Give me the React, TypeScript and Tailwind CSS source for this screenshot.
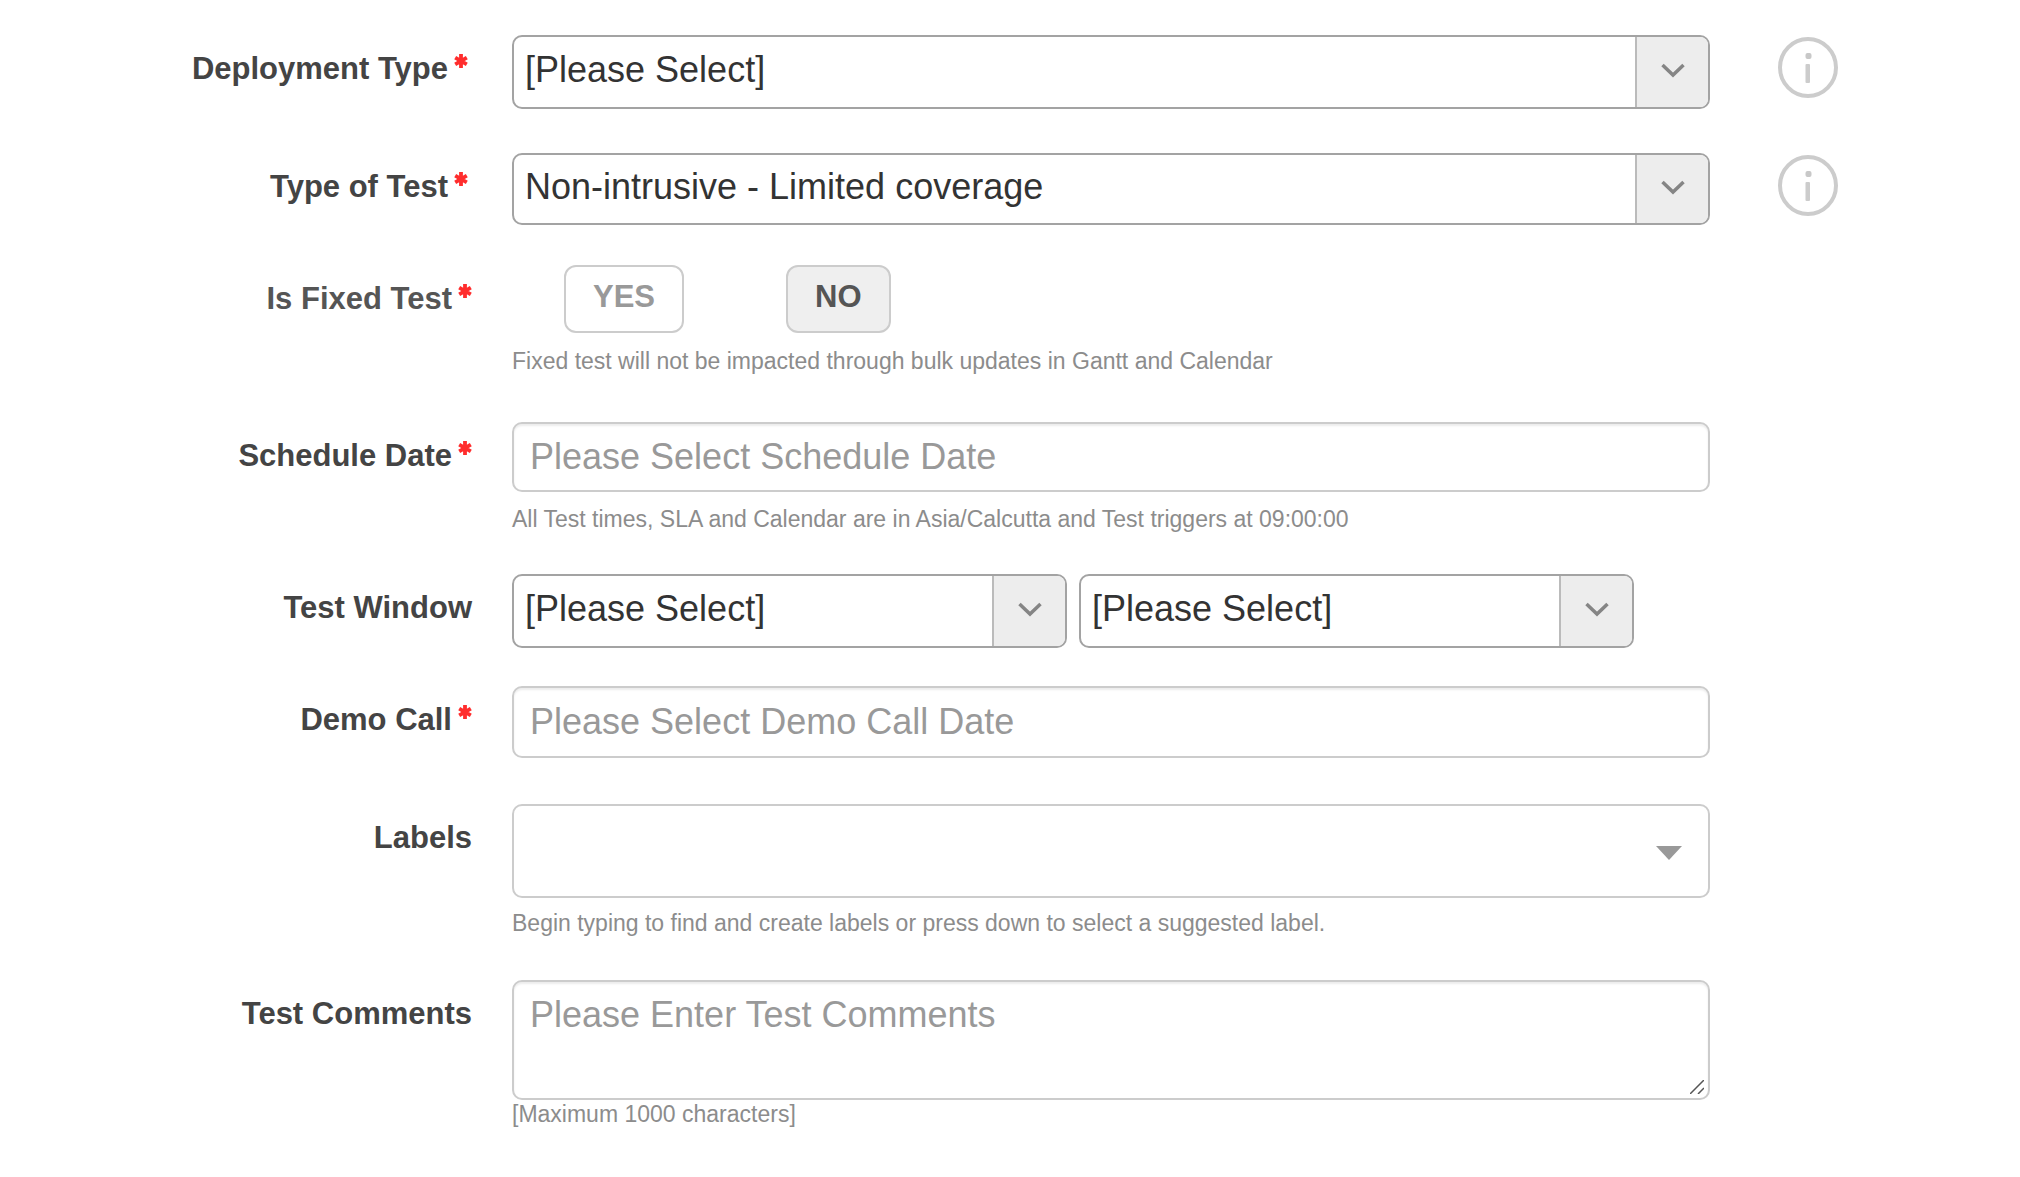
import React, { useState } from 'react';

const INPUT_CLASS =
  'block w-full rounded-[10px] border-2 border-[#ccc] bg-white px-4 text-[36px] text-[#555] placeholder:text-[#999] placeholder:opacity-100 shadow-[inset_0_2px_2px_rgba(0,0,0,0.075)] outline-none focus:border-[#66afe9]';

interface RowProps {
  label: string;
  htmlFor?: string;
  labelId?: string;
  required?: boolean;
  labelClass?: string;
  className?: string;
  aside?: React.ReactNode;
  children: React.ReactNode;
}

function RequiredMark() {
  return (
    <svg width="14" height="14" viewBox="0 0 14 14" stroke="#ff2d2d" strokeWidth="3.8" className="mt-1 ml-[6px]" aria-hidden="true">
      <path d="M7 0v14M1.2 3.6l11.6 6.8M12.8 3.6 1.2 10.4" />
    </svg>
  );
}

function Row({ label, htmlFor, labelId, required, labelClass = 'text-[#444]', className = '', aside, children }: RowProps) {
  const LabelTag = htmlFor ? 'label' : 'span';
  return (
    <div className={`grid grid-cols-[472px_minmax(0,1fr)_242px] ${className}`}>
      <LabelTag
        id={labelId}
        htmlFor={htmlFor}
        className={`flex items-start justify-end pt-[15px] text-[31px] leading-[38px] font-bold ${labelClass}`}
      >
        {label}
        {required && <RequiredMark />}
      </LabelTag>
      <div className="ml-10 mr-[68px] min-w-0">{children}</div>
      <div className="pt-[2px]">{aside}</div>
    </div>
  );
}

interface SelectBoxProps {
  id: string;
  options: string[];
  ariaLabel?: string;
  height?: string;
}

function SelectBox({ id, options, ariaLabel, height = 'h-[74px]' }: SelectBoxProps) {
  return (
    <div className={`relative w-full overflow-hidden rounded-[10px] border-2 border-[#a3a3a3] bg-white ${height}`}>
      <select
        id={id}
        aria-label={ariaLabel}
        className="block h-full w-full appearance-none bg-transparent pb-[5px] pl-[11px] pr-20 text-[36px] text-[#333] outline-none"
      >
        {options.map((option) => (
          <option key={option}>{option}</option>
        ))}
      </select>
      <span className="pointer-events-none absolute inset-y-0 right-0 flex w-[73px] items-center justify-center border-l-2 border-[#bbb] bg-[#ededed] pb-[3px]">
        <svg width="24" height="15" viewBox="0 0 24 15" fill="none" stroke="#858585" strokeWidth="3.5">
          <path d="M1.5 2 12 12 22.5 2" />
        </svg>
      </span>
    </div>
  );
}

function InfoButton({ label }: { label: string }) {
  return (
    <button type="button" aria-label={label} className="block cursor-pointer">
      <svg width="60" height="61" viewBox="0 0 60 61" fill="none">
        <ellipse cx="30" cy="30.5" rx="28" ry="28.5" stroke="#ccc" strokeWidth="4" />
        <rect x="27.5" y="16" width="6" height="6" rx="2" fill="#c8c8c8" />
        <rect x="27.5" y="27" width="4.5" height="19" rx="1" fill="#ccc" />
      </svg>
    </button>
  );
}

function Help({ children, className = '' }: { children: React.ReactNode; className?: string }) {
  return <p className={`text-[23px] leading-[26px] text-[#8c8c8c] ${className}`}>{children}</p>;
}

export default function App() {
  const [isFixed, setIsFixed] = useState(false);

  const toggleClass = (active: boolean) =>
    `h-[68px] rounded-xl border-2 border-[#ccc] px-[27px] pb-1 text-[31px] font-bold cursor-pointer ${
      active ? 'bg-[#efefef] text-[#555]' : 'bg-white text-[#999]'
    }`;

  return (
    <form
      className="min-h-screen bg-white pt-[35px] pb-10 font-['Liberation_Sans',Arial,sans-serif]"
      onSubmit={(e) => e.preventDefault()}
    >
      <Row
        label="Deployment Type"
        htmlFor="deployment-type"
        required
        labelClass="pr-1 text-[#444]"
        aside={<InfoButton label="About deployment type" />}
      >
        <SelectBox id="deployment-type" options={['[Please Select]']} />
      </Row>

      <Row
        label="Type of Test"
        htmlFor="test-type"
        required
        className="mt-11"
        labelClass="pr-1 text-[#444]"
        aside={<InfoButton label="About type of test" />}
      >
        <SelectBox id="test-type" options={['Non-intrusive - Limited coverage']} height="h-[72px]" />
      </Row>

      <Row label="Is Fixed Test" labelId="fixed-label" required className="mt-10" labelClass="text-[#555]">
        <div role="group" aria-labelledby="fixed-label" className="flex gap-[102px] pl-[52px]">
          <button type="button" aria-pressed={isFixed} className={toggleClass(isFixed)} onClick={() => setIsFixed(true)}>
            YES
          </button>
          <button type="button" aria-pressed={!isFixed} className={toggleClass(!isFixed)} onClick={() => setIsFixed(false)}>
            NO
          </button>
        </div>
        <Help className="mt-[15px]">Fixed test will not be impacted through bulk updates in Gantt and Calendar</Help>
      </Row>

      <Row label="Schedule Date" htmlFor="schedule-date" required className="mt-12">
        <input id="schedule-date" type="text" placeholder="Please Select Schedule Date" className={`${INPUT_CLASS} h-[70px]`} />
        <Help className="mt-[14px]">All Test times, SLA and Calendar are in Asia/Calcutta and Test triggers at 09:00:00</Help>
      </Row>

      <Row label="Test Window" htmlFor="window-start" className="mt-[42px]">
        <div className="mr-[76px] flex gap-3">
          <SelectBox id="window-start" options={['[Please Select]']} />
          <SelectBox id="window-end" options={['[Please Select]']} ariaLabel="Test window end" />
        </div>
      </Row>

      <Row label="Demo Call" htmlFor="demo-call" required className="mt-[38px]">
        <input id="demo-call" type="text" placeholder="Please Select Demo Call Date" className={`${INPUT_CLASS} h-[72px]`} />
      </Row>

      <Row label="Labels" htmlFor="labels" className="mt-[46px]">
        <div className="flex h-[94px] items-center rounded-[10px] border-2 border-[#ccc] bg-white pr-[26px]">
          <input id="labels" type="text" className="h-full min-w-0 flex-1 bg-transparent px-4 text-[36px] text-[#555] outline-none" />
          <button type="button" aria-label="Show suggested labels" className="cursor-pointer pt-1">
            <svg width="26" height="14" viewBox="0 0 26 14" fill="#999">
              <path d="M0 0h26L13 14z" />
            </svg>
          </button>
        </div>
        <Help className="mt-3">Begin typing to find and create labels or press down to select a suggested label.</Help>
      </Row>

      <Row label="Test Comments" htmlFor="comments" className="mt-11">
        <div className="relative">
          <textarea
            id="comments"
            maxLength={1000}
            placeholder="Please Enter Test Comments"
            className={`${INPUT_CLASS} h-[120px] resize-none pt-3 leading-[42px]`}
          />
          <svg
            width="14"
            height="14"
            viewBox="0 0 14 14"
            stroke="#555"
            strokeWidth="1.5"
            className="pointer-events-none absolute right-[6px] bottom-[6px]"
          >
            <path d="M0 14 14 0M8 14l6-6" />
          </svg>
        </div>
        <Help className="mt-px">[Maximum 1000 characters]</Help>
      </Row>
    </form>
  );
}
